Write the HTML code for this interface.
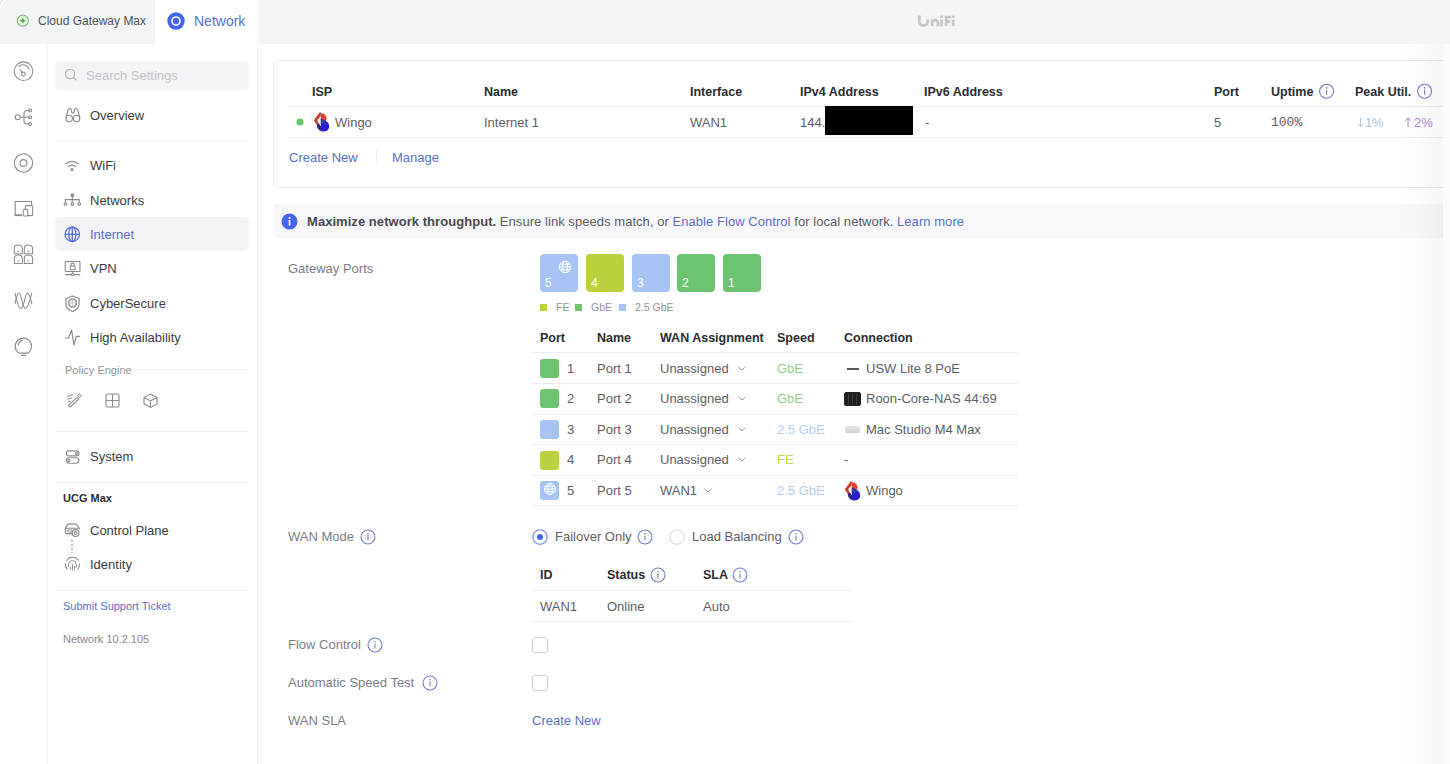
<!DOCTYPE html>
<html><head><meta charset="utf-8">
<style>
*{box-sizing:border-box;margin:0;padding:0}
html,body{width:1450px;height:764px;overflow:hidden;background:#fff;font-family:"Liberation Sans",sans-serif;color:#3c3e42}
.a{position:absolute;white-space:nowrap}
.t{position:absolute;white-space:nowrap;font-size:13px;line-height:18px;height:18px}
.b{font-weight:bold;color:#2a2c31;font-size:12.5px}
.blue{color:#586fc6}
.gray{color:#7a7d84}
.hl{position:absolute;height:1px;background:#eceef1}
svg{position:absolute;overflow:visible}
.ic{fill:none;stroke:#8a8c90;stroke-width:1.1}
.info{fill:none;stroke:#6f7cc8;stroke-width:1.1}
</style></head><body>

<!-- top bar -->
<div class="a" style="left:0;top:0;width:1450px;height:44px;background:#f3f4f6"></div>
<div class="a" style="left:155px;top:0;width:103px;height:44px;background:#fff"></div>
<svg style="left:15px;top:13px" width="16" height="16" viewBox="0 0 16 16"><circle cx="7.8" cy="7.7" r="5.6" fill="#daf5d6" stroke="#8db38b" stroke-width="1.1"/><path d="M7.8 4.6 Q8.2 7.3 10.9 7.7 Q8.2 8.1 7.8 10.8 Q7.4 8.1 4.7 7.7 Q7.4 7.3 7.8 4.6 Z" fill="#5f9a5f"/></svg>
<svg style="left:0;top:0" width="12" height="12"><path d="M0.3 7.5 A9 9 0 0 1 4.5 0.3" fill="none" stroke="#fff" stroke-width="1.3"/><path d="M0 5 A9 9 0 0 1 2.5 0" fill="none" stroke="#d8d9dc" stroke-width="0.8"/></svg>
<div class="t" style="left:38px;top:12px;font-size:12px;color:#505359">Cloud Gateway Max</div>
<svg style="left:167px;top:12px" width="18" height="18" viewBox="0 0 18 18"><circle cx="9" cy="9" r="8.7" fill="#4466ee"/><circle cx="9" cy="9" r="4" fill="none" stroke="#fff" stroke-width="1.6"/></svg>
<div class="t" style="left:194px;top:13px;font-size:14px;line-height:17px;color:#5870d2">Network</div>
<svg style="left:916px;top:14px" width="42" height="14" viewBox="0 0 42 14"><g fill="none" stroke="#c6c7cb" stroke-width="2.7"><path d="M3.4 1.6 V7.4 A4.1 4.1 0 0 0 11.6 7.4 V5.6"/><path d="M16.2 12.2 V9 A2.9 2.9 0 0 1 22 9 V12.2 M16.2 12.2 V5.6"/><path d="M25.6 5.6 V12.2 M30.1 12.2 V3 H35 M30.1 7.7 H34.2 M37.2 5.6 V12.2"/></g><rect x="24.2" y="1.6" width="2.8" height="2.3" fill="#c6c7cb"/><rect x="35.8" y="1.6" width="2.8" height="2.3" fill="#c6c7cb"/></svg>

<!-- left rail -->
<div class="a" style="left:47px;top:44px;width:1px;height:720px;background:#eef0f2"></div>
<div class="a" style="left:257px;top:44px;width:1px;height:720px;background:#eef0f2"></div>

<svg style="left:0;top:44px" width="47" height="330" viewBox="0 0 47 330">
 <g class="ic">
  <circle cx="23.5" cy="27.2" r="9.3"/>
  <path d="M18.5 22.5 A6.5 6.5 0 0 1 29.2 25.5"/>
  <circle cx="23.4" cy="30" r="1.9"/>
  <path d="M22.2 28.6 L19.8 25.3"/>
  <circle cx="17.7" cy="73.2" r="2.5"/>
  <path d="M20.2 73.2 H30"/>
  <path d="M30 66.5 H27 Q24 66.5 24 69.5 V77 Q24 80 27 80 H30"/>
  <circle cx="30.2" cy="66.5" r="1.4"/>
  <circle cx="30.2" cy="73.2" r="1.4"/>
  <circle cx="30.2" cy="80" r="1.4"/>
  <circle cx="23.5" cy="119" r="9.2"/>
  <circle cx="23.5" cy="119" r="3.4"/>
  <path d="M15.2 171 V157.5 H31.6 V161"/>
  <rect x="25.4" y="161.6" width="7.3" height="10" rx="1.2" fill="#fff"/>
  <rect x="23.2" y="165.4" width="4.6" height="6.6" rx="1" fill="#fff"/>
  <path d="M14.5 171.2 H22" stroke-width="1.8"/>
  <path d="M14.3 209.8 V204.5 Q14.3 201 18.2 201 Q22.3 201 22.3 204.5 V209.8 Z M24.3 209.8 V204.5 Q24.3 201 28.3 201 Q32.6 201 32.6 204.5 V209.8 Z M14.3 219.5 V214.5 Q14.3 211 18.2 211 Q22.3 211 22.3 214.5 V219.5 Z M24.3 219.5 V214.5 Q24.3 211 28.3 211 Q32.6 211 32.6 214.5 V219.5 Z"/>
  <path d="M17.3 207.3 h2 M27.3 207.3 h2 M17.3 217 h2 M27.3 217 h2" stroke-width="1"/>
  <path d="M15 249 C16.5 256 18.5 264.5 21 264.5 C24 264.5 25 249 27.4 249 C29.5 249 30.5 254 31.8 260"/>
  <path d="M15 260 C16 254 17 249 19 249 C21.5 249 22.5 264.5 25.3 264.5 C28 264.5 30 256 31.8 249"/>
  <path d="M19 309.2 A8.2 8.2 0 1 1 27.7 309.2 Z" stroke-width="1.2"/>
  <path d="M21.2 311.4 H26" stroke-width="1.3"/>
  <path d="M18.3 301.5 A5.6 5.6 0 0 1 22.5 296.3" stroke-width="1.1"/>
 </g>
</svg>

<!-- settings sidebar -->
<div class="a" style="left:55px;top:61px;width:194px;height:29px;background:#f4f4f7;border-radius:4px"></div>
<svg style="left:64px;top:68px" width="14" height="14" viewBox="0 0 14 14"><circle cx="6" cy="6" r="4.6" fill="none" stroke="#b3b5b9" stroke-width="1.2"/><path d="M9.3 9.3 L12.3 12.3" stroke="#b3b5b9" stroke-width="1.3"/></svg>
<div class="t" style="left:86px;top:67px;color:#c2c4c8">Search Settings</div>

<div class="a" style="left:55px;top:217px;width:194px;height:34px;background:#f3f3f6;border-radius:5px"></div>

<svg style="left:60px;top:100px" width="30" height="360" viewBox="0 0 30 360" class="ic">
 <g class="ic">
  <!-- binoculars -->
  <circle cx="9.2" cy="18.4" r="3.2"/><circle cx="16.6" cy="18.4" r="3.2"/>
  <path d="M6 18 L8 10 Q9 8 11 9 L12 13 M19.8 18 L17.8 10 Q16.8 8 14.8 9 L13.8 13 M12 13 H13.8"/>
  <!-- wifi -->
  <path d="M5.5 64.2 A9 9 0 0 1 18.5 64.2 M8.2 66.7 A5.5 5.5 0 0 1 15.8 66.7" stroke-width="1.2"/>
  <circle cx="12" cy="69.4" r="1.5" fill="#8a8c90" stroke="none"/>
  <!-- networks -->
  <path d="M12.3 96.4 V102.6 M5.4 102.6 V99.6 H19.2 V102.6"/>
  <circle cx="12.3" cy="95.2" r="1.3" fill="#8a8c90"/>
  <rect x="4.2" y="102.8" width="2.5" height="2.3" rx="0.6"/><rect x="11.1" y="102.8" width="2.5" height="2.3" rx="0.6"/><rect x="18" y="102.8" width="2.5" height="2.3" rx="0.6"/>
  <!-- vpn -->
  <rect x="5.2" y="161.5" width="14.8" height="10" rx="0.8"/>
  <rect x="10.2" y="166" width="4.8" height="3.8" rx="0.5"/>
  <path d="M11 166 V164.7 A1.6 1.6 0 0 1 14.2 164.7 V166"/>
  <path d="M5 174.6 H20.2 M12.6 171.5 V173.4"/>
  <circle cx="12.6" cy="174.6" r="1.2" fill="#fff"/>
  <!-- cybersecure -->
  <path d="M12.5 196 L19.1 198.6 V204 Q19.1 209 12.5 211.5 Q5.9 209 5.9 204 V198.6 Z" stroke-width="1.2"/>
  <circle cx="12.5" cy="203" r="3.9" stroke-width="1.8" stroke="#9a9ca0"/>
  <path d="M8.6 203 H16.4 M12.5 199.1 V206.9" stroke="#c4c5c8" stroke-width="0.9"/>
  <!-- high availability -->
  <path d="M4.8 238 H8.6 L11.6 230 L14 245 L16.3 236.3 H20" stroke-width="1.2" stroke-linejoin="round"/>
 </g>
</svg>

<div class="t" style="left:90px;top:107px;color:#3a3c40">Overview</div>
<div class="hl" style="left:56px;top:140px;width:192px;background:#eff0f2"></div>
<div class="t" style="left:90px;top:157px;color:#3a3c40">WiFi</div>
<div class="t" style="left:90px;top:192px;color:#3a3c40">Networks</div>
<svg style="left:64px;top:226px" width="17" height="17" viewBox="0 0 17 17"><g fill="none" stroke="#5a6fd2" stroke-width="1.3"><circle cx="8.3" cy="8.3" r="7.2"/><ellipse cx="8.3" cy="8.3" rx="3.6" ry="7.2"/><path d="M1.1 8.3 H15.5 M8.3 1.1 V15.5"/></g></svg>
<div class="t" style="left:90px;top:226px;color:#5a6fd0">Internet</div>
<div class="t" style="left:90px;top:260px;color:#3a3c40">VPN</div>
<div class="t" style="left:90px;top:295px;color:#3a3c40">CyberSecure</div>
<div class="t" style="left:90px;top:329px;color:#3a3c40">High Availability</div>

<div class="t" style="left:65px;top:361px;font-size:11px;color:#909297">Policy Engine</div>
<div class="hl" style="left:136px;top:369px;width:113px;background:#eff0f2"></div>
<div class="hl" style="left:56px;top:369px;width:6px;background:#eff0f2"></div>
<svg style="left:60px;top:390px" width="110" height="22" viewBox="0 0 110 22"><g class="ic">
 <path d="M8.6 15.2 L17.2 7.2 L18.9 8.9 L10.3 16.9 Z M7.2 6.6 L13.2 4.6 M7.4 9.3 L12.4 7.8 M8 12 L10.6 11"/>
 <path d="M19.6 3.6 l0.7 1.4 l1.4 0.7 l-1.4 0.7 l-0.7 1.4 l-0.7 -1.4 l-1.4 -0.7 l1.4 -0.7 Z" stroke-width="0.9"/>
 <rect x="46" y="4" width="13" height="13" rx="1.5"/><path d="M52.5 4 V17 M46 10.5 H59"/>
 <path d="M90.5 4 L97 7.5 V14 L90.5 17.5 L84 14 V7.5 Z M84 7.5 L90.5 11 L97 7.5 M90.5 11 V17.5"/>
</g></svg>
<div class="hl" style="left:56px;top:431px;width:192px;background:#eff0f2"></div>
<svg style="left:64px;top:448px" width="16" height="16" viewBox="0 0 16 16"><g class="ic"><rect x="2.3" y="2.9" width="12.6" height="5" rx="2.5"/><rect x="2.3" y="9.8" width="12.6" height="5.4" rx="2.7"/><circle cx="12.4" cy="5.4" r="1.1"/><circle cx="4.8" cy="12.5" r="1.1"/></g></svg>
<div class="t" style="left:90px;top:448px;color:#3a3c40">System</div>
<div class="hl" style="left:56px;top:482px;width:192px;background:#eff0f2"></div>
<div class="t" style="left:63px;top:489px;font-size:11px;font-weight:bold;color:#2a2c30">UCG Max</div>
<svg style="left:63px;top:521px" width="22" height="54" viewBox="0 0 22 54"><g class="ic">
 <path d="M2.3 12.6 V7.2 L4.8 3.1 H13.4 L16.3 7.2 V8.4 M2.3 7.2 H15.6 M2.3 12.6 H9.3"/>
 <rect x="4.3" y="9" width="4.8" height="2" rx="0.4" stroke-width="0.9"/>
 <circle cx="12.6" cy="12" r="3.4" fill="#fff"/><circle cx="12.6" cy="12" r="1.4"/>
 <path d="M9 18.8 V31.5" stroke-dasharray="1.6 2.4" stroke-width="1.3"/>
 <path d="M3.6 39.8 A7 7 0 0 1 15.6 39.4 M2.4 42.5 A7 7 0 0 0 4.2 48.3 M16.4 42.6 A7 7 0 0 1 14.6 48.4" />
 <path d="M5.6 46.2 V43.4 A3.8 3.8 0 0 1 13.2 43.4 V46.8 M9.4 42.8 V49.6 M7.4 45.8 V48.6 M11.4 45 V49" stroke-width="1"/>
</g></svg>
<div class="t" style="left:90px;top:522px;color:#3a3c40">Control Plane</div>
<div class="t" style="left:90px;top:556px;color:#3a3c40">Identity</div>
<div class="hl" style="left:56px;top:590px;width:192px;background:#eff0f2"></div>
<div class="t" style="left:63px;top:597px;font-size:11px;color:#586fc6">Submit Support Ticket</div>
<div class="t" style="left:63px;top:630px;font-size:11px;color:#85878c">Network 10.2.105</div>

<!-- MAIN -->

<!-- MAIN -->
<div class="a" style="left:273px;top:60px;width:1190px;height:128px;border:1px solid #ededf0;border-radius:4px;background:#fff"></div>
<div class="t b" style="left:312px;top:83px">ISP</div>
<div class="t b" style="left:484px;top:83px">Name</div>
<div class="t b" style="left:690px;top:83px">Interface</div>
<div class="t b" style="left:800px;top:83px">IPv4 Address</div>
<div class="t b" style="left:924px;top:83px">IPv6 Address</div>
<div class="t b" style="left:1214px;top:83px">Port</div>
<div class="t b" style="left:1271px;top:83px">Uptime</div>
<div class="t b" style="left:1355px;top:83px">Peak Util.</div>
<svg style="left:1319px;top:83px" width="16" height="16" viewBox="0 0 16 16"><circle class="info" cx="7.6" cy="8.2" r="7"/><path d="M7.6 6.8 V11.8" fill="none" stroke="#7880a8" stroke-width="1.1"/><circle cx="7.6" cy="4.9" r="0.8" fill="#7880a8"/></svg>
<svg style="left:1417px;top:83px" width="16" height="16" viewBox="0 0 16 16"><circle class="info" cx="7.6" cy="8.2" r="7"/><path d="M7.6 6.8 V11.8" fill="none" stroke="#7880a8" stroke-width="1.1"/><circle cx="7.6" cy="4.9" r="0.8" fill="#7880a8"/></svg>
<div class="hl" style="left:288px;top:106px;width:1160px"></div>
<svg style="left:296px;top:118px" width="8" height="8"><circle cx="4" cy="4" r="3.6" fill="#6cc46c"/></svg>
<svg class="wingo" style="left:313px;top:112px" width="18" height="20" viewBox="0 0 18 20"><path d="M6.8 0.3 L0.8 8.2 L3.8 13 L5.8 11.6 L4.2 8.2 L7.8 4 Z" fill="#d63a2e"/><path d="M7.8 1.2 Q13 1 13.8 6.8 L12.4 9.6 L7.8 7.8 Z" fill="#d9432f"/><path d="M7.8 6.5 L12.6 8.8 Q16.6 11.2 16.2 15.2 Q15.4 19.4 10 19.5 Q5.5 18.9 4.4 15.5 L3.8 13 L5.8 11.6 L7.8 14.8 Z" fill="#2a1ed2"/><path d="M7.8 7.5 L12.8 9.2 L12.2 12.2 L7.8 11.2 Z" fill="#2f4290"/><path d="M3.8 13 L5.8 11.6 L7.8 14.8 L8.6 17.8 Q5.2 17.2 4.4 15.5 Z" fill="#35286e"/><path d="M6.8 0.3 L7.9 0.6 L7.8 4 Z" fill="#553040"/></svg>
<div class="t" style="left:335px;top:114px;color:#5b5e64">Wingo</div>
<div class="t" style="left:484px;top:114px;color:#5b5e64">Internet 1</div>
<div class="t" style="left:690px;top:114px;color:#5b5e64">WAN1</div>
<div class="t" style="left:800px;top:114px;color:#5b5e64">144.</div>
<div class="a" style="left:825px;top:106px;width:88px;height:29px;background:#000"></div>
<div class="t" style="left:925px;top:114px;color:#5b5e64">-</div>
<div class="t" style="left:1214px;top:114px;color:#5b5e64">5</div>
<div class="t" style="left:1271px;top:114px;color:#5b5e64;font-family:'Liberation Mono',monospace">100%</div>
<svg style="left:1357px;top:117px" width="8" height="11" viewBox="0 0 8 11"><path d="M3.5 0.5 V9.5 M0.8 6.8 L3.5 9.6 L6.2 6.8" fill="none" stroke="#a9c3dc" stroke-width="1"/></svg><div class="t" style="left:1365px;top:114px;color:#a3c0dc;letter-spacing:-0.5px">1%</div>
<svg style="left:1405px;top:117px" width="8" height="11" viewBox="0 0 8 11"><path d="M3 10 V1 M0.3 3.7 L3 0.9 L5.7 3.7" fill="none" stroke="#a58bc6" stroke-width="1"/></svg><div class="t" style="left:1414px;top:114px;color:#ab8dd0">2%</div>
<div class="hl" style="left:288px;top:137px;width:1160px"></div>
<div class="t blue" style="left:289px;top:149px">Create New</div>
<div class="a" style="left:376px;top:150px;width:1px;height:15px;background:#eceef0"></div>
<div class="t blue" style="left:392px;top:149px">Manage</div>

<!-- banner -->
<div class="a" style="left:273px;top:204px;width:1190px;height:34px;background:#f8f8fa;border-radius:4px"></div>
<svg style="left:281px;top:213px" width="17" height="17" viewBox="0 0 17 17"><circle cx="8.5" cy="8.5" r="8" fill="#4466ee"/><rect x="7.7" y="7" width="1.7" height="5.5" fill="#fff"/><circle cx="8.55" cy="4.9" r="1" fill="#fff"/></svg>
<div class="t" style="left:307px;top:213px;color:#595c62;letter-spacing:0.05px"><b style="color:#46494e">Maximize network throughput.</b> Ensure link speeds match, or <span class="blue">Enable Flow Control</span> for local network. <span class="blue">Learn more</span></div>

<!-- shadow -->
<div class="a" style="left:1398px;top:44px;width:45px;height:720px;background:linear-gradient(to right,rgba(20,20,40,0),rgba(20,20,40,0.012) 40%,rgba(20,20,40,0.045))"></div>
<div class="a" style="left:1443px;top:44px;width:7px;height:720px;background:#fafafb"></div>

<!-- form labels -->
<div class="t gray" style="left:288px;top:260px">Gateway Ports</div>
<div class="t gray" style="left:288px;top:528px">WAN Mode</div>
<div class="t gray" style="left:288px;top:636px">Flow Control</div>
<div class="t gray" style="left:288px;top:674px">Automatic Speed Test</div>
<div class="t gray" style="left:288px;top:712px">WAN SLA</div>


<div class="a" style="left:540px;top:254px;width:38px;height:38px;background:#a6c3f4;border-radius:4px"></div>
<div class="t" style="left:545px;top:274px;font-size:12px;color:#fff">5</div>
<div class="a" style="left:586px;top:254px;width:38px;height:38px;background:#bdd03f;border-radius:4px"></div>
<div class="t" style="left:591px;top:274px;font-size:12px;color:#fff">4</div>
<div class="a" style="left:632px;top:254px;width:38px;height:38px;background:#a6c3f4;border-radius:4px"></div>
<div class="t" style="left:637px;top:274px;font-size:12px;color:#fff">3</div>
<div class="a" style="left:677px;top:254px;width:38px;height:38px;background:#6dc46f;border-radius:4px"></div>
<div class="t" style="left:682px;top:274px;font-size:12px;color:#fff">2</div>
<div class="a" style="left:723px;top:254px;width:38px;height:38px;background:#6dc46f;border-radius:4px"></div>
<div class="t" style="left:728px;top:274px;font-size:12px;color:#fff">1</div>

<svg style="left:558px;top:260px" width="14" height="14" viewBox="0 0 14 14"><g fill="none" stroke="#fff" stroke-width="1"><circle cx="7" cy="7" r="5.8"/><ellipse cx="7" cy="7" rx="2.5" ry="5.8"/><path d="M1.2 7 H12.8 M2.2 4.2 H11.8 M2.2 9.8 H11.8"/></g></svg>
<div class="a" style="left:540px;top:304px;width:7px;height:7px;background:#bdd03f"></div>
<div class="t" style="left:556px;top:298px;font-size:10.5px;color:#909297">FE</div>
<div class="a" style="left:575px;top:304px;width:7px;height:7px;background:#6dc46f"></div>
<div class="t" style="left:591px;top:298px;font-size:10.5px;color:#909297">GbE</div>
<div class="a" style="left:619px;top:304px;width:7px;height:7px;background:#a6c3f4"></div>
<div class="t" style="left:635px;top:298px;font-size:10.5px;color:#909297">2.5 GbE</div>

<div class="t b" style="left:540px;top:329px">Port</div>
<div class="t b" style="left:597px;top:329px">Name</div>
<div class="t b" style="left:660px;top:329px">WAN Assignment</div>
<div class="t b" style="left:777px;top:329px">Speed</div>
<div class="t b" style="left:844px;top:329px">Connection</div>
<div class="hl" style="left:531px;top:352px;width:487px"></div>
<div class="a" style="left:540px;top:359px;width:19px;height:19px;background:#6dc46f;border-radius:3px"></div>
<div class="t" style="left:567px;top:360px;color:#5b5e64">1</div>
<div class="t" style="left:597px;top:360px;color:#5b5e64">Port 1</div>
<div class="t" style="left:660px;top:360px;color:#5b5e64">Unassigned</div>
<svg style="left:738px;top:366px" width="8" height="5" viewBox="0 0 8 5"><path d="M0.5 0.8 L4 4 L7.5 0.8" fill="none" stroke="#9a9ca1" stroke-width="1"/></svg>
<div class="t" style="left:777px;top:360px;color:#8fd08c">GbE</div>
<div class="a" style="left:847px;top:368px;width:12px;height:2px;background:#55575b"></div>
<div class="t" style="left:866px;top:360px;color:#5b5e64">USW Lite 8 PoE</div>
<div class="hl" style="left:531px;top:383px;width:487px"></div>
<div class="a" style="left:540px;top:389px;width:19px;height:19px;background:#6dc46f;border-radius:3px"></div>
<div class="t" style="left:567px;top:390px;color:#5b5e64">2</div>
<div class="t" style="left:597px;top:390px;color:#5b5e64">Port 2</div>
<div class="t" style="left:660px;top:390px;color:#5b5e64">Unassigned</div>
<svg style="left:738px;top:396px" width="8" height="5" viewBox="0 0 8 5"><path d="M0.5 0.8 L4 4 L7.5 0.8" fill="none" stroke="#9a9ca1" stroke-width="1"/></svg>
<div class="t" style="left:777px;top:390px;color:#8fd08c">GbE</div>
<div class="a" style="left:844px;top:392px;width:17px;height:14px;background:repeating-linear-gradient(to right,#1f1f1f 0,#1f1f1f 3px,#3a3a3c 3px,#3a3a3c 4px);border-radius:2px;border:1px solid #222"></div>
<div class="t" style="left:866px;top:390px;color:#5b5e64">Roon-Core-NAS 44:69</div>
<div class="hl" style="left:531px;top:414px;width:487px"></div>
<div class="a" style="left:540px;top:420px;width:19px;height:19px;background:#a6c3f4;border-radius:3px"></div>
<div class="t" style="left:567px;top:421px;color:#5b5e64">3</div>
<div class="t" style="left:597px;top:421px;color:#5b5e64">Port 3</div>
<div class="t" style="left:660px;top:421px;color:#5b5e64">Unassigned</div>
<svg style="left:738px;top:427px" width="8" height="5" viewBox="0 0 8 5"><path d="M0.5 0.8 L4 4 L7.5 0.8" fill="none" stroke="#9a9ca1" stroke-width="1"/></svg>
<div class="t" style="left:777px;top:421px;color:#b5cdf2">2.5 GbE</div>
<div class="a" style="left:845px;top:425.5px;width:15px;height:7px;background:linear-gradient(#e6e6e8,#cdced1);border-radius:2px"></div>
<div class="t" style="left:866px;top:421px;color:#5b5e64">Mac Studio M4 Max</div>
<div class="hl" style="left:531px;top:444px;width:487px"></div>
<div class="a" style="left:540px;top:451px;width:19px;height:19px;background:#bdd03f;border-radius:3px"></div>
<div class="t" style="left:567px;top:451px;color:#5b5e64">4</div>
<div class="t" style="left:597px;top:451px;color:#5b5e64">Port 4</div>
<div class="t" style="left:660px;top:451px;color:#5b5e64">Unassigned</div>
<svg style="left:738px;top:457px" width="8" height="5" viewBox="0 0 8 5"><path d="M0.5 0.8 L4 4 L7.5 0.8" fill="none" stroke="#9a9ca1" stroke-width="1"/></svg>
<div class="t" style="left:777px;top:451px;color:#c6d65a">FE</div>
<div class="t" style="left:844px;top:451px;color:#5b5e64">-</div>
<div class="hl" style="left:531px;top:475px;width:487px"></div>
<div class="a" style="left:540px;top:481px;width:19px;height:19px;background:#a6c3f4;border-radius:3px"></div>
<div class="t" style="left:567px;top:482px;color:#5b5e64">5</div>
<div class="t" style="left:597px;top:482px;color:#5b5e64">Port 5</div>
<div class="t" style="left:660px;top:482px;color:#5b5e64">WAN1</div>
<svg style="left:704px;top:488px" width="8" height="5" viewBox="0 0 8 5"><path d="M0.5 0.8 L4 4 L7.5 0.8" fill="none" stroke="#9a9ca1" stroke-width="1"/></svg>
<div class="t" style="left:777px;top:482px;color:#b5cdf2">2.5 GbE</div>
<svg class="wingo2" style="left:844px;top:481px" width="18" height="20" viewBox="0 0 18 20"><path d="M6.8 0.3 L0.8 8.2 L3.8 13 L5.8 11.6 L4.2 8.2 L7.8 4 Z" fill="#d63a2e"/><path d="M7.8 1.2 Q13 1 13.8 6.8 L12.4 9.6 L7.8 7.8 Z" fill="#d9432f"/><path d="M7.8 6.5 L12.6 8.8 Q16.6 11.2 16.2 15.2 Q15.4 19.4 10 19.5 Q5.5 18.9 4.4 15.5 L3.8 13 L5.8 11.6 L7.8 14.8 Z" fill="#2a1ed2"/><path d="M7.8 7.5 L12.8 9.2 L12.2 12.2 L7.8 11.2 Z" fill="#2f4290"/><path d="M3.8 13 L5.8 11.6 L7.8 14.8 L8.6 17.8 Q5.2 17.2 4.4 15.5 Z" fill="#35286e"/><path d="M6.8 0.3 L7.9 0.6 L7.8 4 Z" fill="#553040"/></svg>
<div class="t" style="left:866px;top:482px;color:#5b5e64">Wingo</div>
<div class="hl" style="left:531px;top:505px;width:487px"></div>
<svg style="left:543px;top:482px" width="14" height="14" viewBox="0 0 14 14"><g fill="none" stroke="#fff" stroke-width="1"><circle cx="7" cy="7" r="5.5"/><ellipse cx="7" cy="7" rx="2.3" ry="5.5"/><path d="M1.5 7 H12.5 M2.4 4.4 H11.6 M2.4 9.6 H11.6"/></g></svg>
<svg style="left:360px;top:529px" width="16" height="16" viewBox="0 0 16 16"><circle class="info" cx="8" cy="8" r="7"/><path d="M8 6.6 V11.6" fill="none" stroke="#7880a8" stroke-width="1.1"/><circle cx="8" cy="4.7" r="0.8" fill="#7880a8"/></svg>

<svg style="left:532px;top:529px" width="16" height="16" viewBox="0 0 16 16"><circle cx="8" cy="8" r="7.2" fill="#fff" stroke="#6b85d8" stroke-width="1.1"/><circle cx="8" cy="8" r="3" fill="#4466ee"/></svg>
<div class="t" style="left:555px;top:528px;color:#5b5e64">Failover Only</div>
<svg style="left:669px;top:529px" width="16" height="16" viewBox="0 0 16 16"><circle cx="8" cy="8" r="7.2" fill="#fff" stroke="#d6d8db" stroke-width="1.1"/></svg>
<div class="t" style="left:692px;top:528px;color:#5b5e64">Load Balancing</div>
<svg style="left:637px;top:529px" width="16" height="16" viewBox="0 0 16 16"><circle class="info" cx="8" cy="8" r="7"/><path d="M8 6.6 V11.6" fill="none" stroke="#7880a8" stroke-width="1.1"/><circle cx="8" cy="4.7" r="0.8" fill="#7880a8"/></svg>
<svg style="left:788px;top:529px" width="16" height="16" viewBox="0 0 16 16"><circle class="info" cx="8" cy="8" r="7"/><path d="M8 6.6 V11.6" fill="none" stroke="#7880a8" stroke-width="1.1"/><circle cx="8" cy="4.7" r="0.8" fill="#7880a8"/></svg>

<div class="t b" style="left:540px;top:566px">ID</div>
<div class="t b" style="left:607px;top:566px">Status</div>
<div class="t b" style="left:703px;top:566px">SLA</div>
<svg style="left:650px;top:567px" width="16" height="16" viewBox="0 0 16 16"><circle class="info" cx="8" cy="8" r="7"/><path d="M8 6.6 V11.6" fill="none" stroke="#7880a8" stroke-width="1.1"/><circle cx="8" cy="4.7" r="0.8" fill="#7880a8"/></svg>
<svg style="left:732px;top:567px" width="16" height="16" viewBox="0 0 16 16"><circle class="info" cx="8" cy="8" r="7"/><path d="M8 6.6 V11.6" fill="none" stroke="#7880a8" stroke-width="1.1"/><circle cx="8" cy="4.7" r="0.8" fill="#7880a8"/></svg>

<div class="hl" style="left:532px;top:590px;width:320px"></div>
<div class="t" style="left:540px;top:598px;color:#5b5e64">WAN1</div>
<div class="t" style="left:607px;top:598px;color:#5b5e64">Online</div>
<div class="t" style="left:703px;top:598px;color:#5b5e64">Auto</div>
<div class="hl" style="left:532px;top:621px;width:320px"></div>
<svg style="left:367px;top:637px" width="16" height="16" viewBox="0 0 16 16"><circle class="info" cx="8" cy="8" r="7"/><path d="M8 6.6 V11.6" fill="none" stroke="#7880a8" stroke-width="1.1"/><circle cx="8" cy="4.7" r="0.8" fill="#7880a8"/></svg>
<svg style="left:422px;top:675px" width="16" height="16" viewBox="0 0 16 16"><circle class="info" cx="8" cy="8" r="7"/><path d="M8 6.6 V11.6" fill="none" stroke="#7880a8" stroke-width="1.1"/><circle cx="8" cy="4.7" r="0.8" fill="#7880a8"/></svg>

<div class="a" style="left:532px;top:637px;width:16px;height:16px;border:1px solid #cfd1d4;border-radius:3px"></div>
<div class="a" style="left:532px;top:675px;width:16px;height:16px;border:1px solid #cfd1d4;border-radius:3px"></div>
<div class="t blue" style="left:532px;top:712px">Create New</div>
</body></html>
